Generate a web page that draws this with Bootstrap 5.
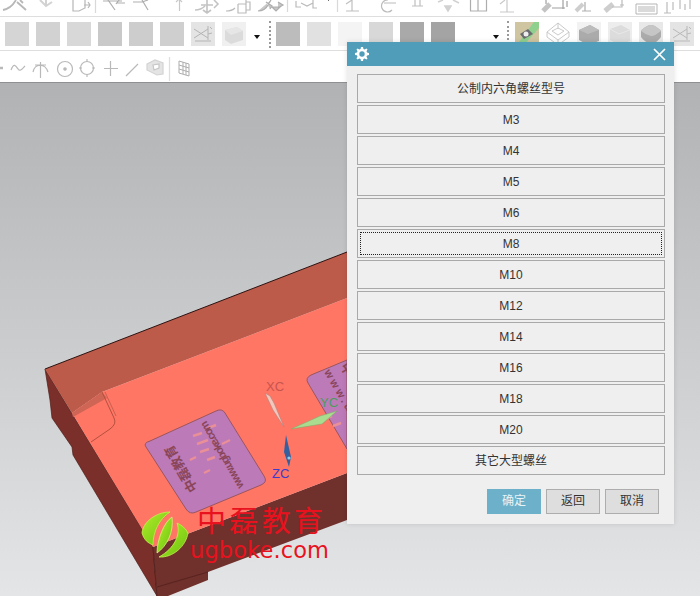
<!DOCTYPE html>
<html lang="zh-CN">
<head>
  <meta charset="UTF-8" />
  <meta name="viewport" content="width=device-width, initial-scale=1" />
  <title>公制内六角螺丝型号</title>
  <link href="https://cdn.jsdelivr.net/npm/bootstrap@5.3.0/dist/css/bootstrap.min.css" rel="stylesheet" />
  <style>
    html, body {
      margin: 0;
      background: #fff;
    }
    body {
      font-family: "Liberation Sans", "Noto Sans CJK SC", sans-serif;
      overflow: hidden;
    }
    .app-frame {
      position: relative;
      width: 700px;
      height: 596px;
      overflow: hidden;
    }
    .tool-strip {
      background: #fff;
      border-bottom: 1px solid #dedede;
    }
    .tool-strip svg {
      display: block;
      filter: blur(.4px);
    }
    .strip-top { height: 17px; }
    .strip-top svg, .strip-low svg { opacity: .8; }
    .strip-mid { height: 34px; padding: 5px 0 0 5px; gap: 7px; }
    .strip-low { height: 32px; border-bottom: 1px solid #8f9092; }
    .tool-sq { width: 24px; height: 24px; flex: none; }
    .tool-sq svg { width: 24px; height: 24px; }
    .sq-1 { background: #d5d5d5; }
    .sq-2 { background: #d2d2d2; }
    .sq-3 { background: #d8d8d8; }
    .sq-4 { background: #c9c9c9; }
    .sq-5 { background: #cdcdcd; }
    .sq-6 { background: #cfcfcf; }
    .sq-7 { background: #e4e4e4; }
    .sq-8 { background: #bcbcbc; }
    .sq-9 { background: #e1e1e1; }
    .sq-10 { background: #f4f4f4; }
    .sq-11 { background: #d8d8d8; }
    .sq-12 { background: #a9a9a9; }
    .sq-13 { background: #a4a4a4; }
    .sq-tan { background: #cfc5a0; }
    .tool-caret {
      width: 0;
      height: 0;
      flex: none;
      margin: 13px 0 0 1px;
      border-left: 3px solid transparent;
      border-right: 3px solid transparent;
      border-top: 4px solid #111;
    }
    .caret-far { margin-left: 31px; }
    .tool-dots {
      width: 0;
      height: 27px;
      flex: none;
      margin: -1px -2px 0 2px;
      border-left: 2px dotted #999;
    }
    .dots-far { margin-left: 1px; margin-right: -1px; }
    .view-area {
      height: 513px;
      background: linear-gradient(180deg, #b0b2b4 0%, #e4e5e6 100%);
    }
    .view-area svg {
      display: block;
    }
    .screw-dialog {
      position: absolute;
      left: 347px;
      top: 42px;
      width: 327px;
      height: 482px;
      background: #efefef;
      box-shadow: 0 0 5px rgba(0, 0, 0, .12);
    }
    .dialog-head {
      height: 24px;
      padding: 0 8px 0 8px;
      background: #4f9db8;
    }
    .dialog-head svg {
      display: block;
    }
    .size-list {
      gap: 2px;
      padding: 8px 9px 0 10px;
    }
    .size-btn {
      position: relative;
      height: 29px;
      padding: 1px 0 0;
      border: 1px solid #a9a9a9;
      border-radius: 0;
      background: #efefef;
      color: #333;
      font-size: 12px;
      line-height: 26px;
    }
    .size-btn:hover {
      background: #efefef;
      border-color: #a9a9a9;
      color: #333;
    }
    .size-active {
      outline: 1px dotted #222;
      outline-offset: -4px;
    }
    .dialog-foot {
      gap: 5px;
      padding: 14px 15px 0 0;
    }
    .foot-btn {
      width: 54px;
      height: 25px;
      padding: 0;
      border: 1px solid #adadad;
      border-radius: 0;
      background: #dedede;
      color: #333;
      font-size: 12px;
      line-height: 23px;
    }
    .foot-ok {
      background: #6cb0c9;
      border-color: #6cb0c9;
      color: #e8f4f8;
    }
    .axis-text {
      font-family: "Liberation Sans", sans-serif;
      font-size: 13px;
    }
    .pad-cn {
      font-family: "Noto Sans CJK SC", sans-serif;
      font-size: 13px;
      font-weight: 700;
      fill: #8a4658;
    }
    .pad-url {
      font-family: "Liberation Sans", sans-serif;
      font-size: 11px;
      font-weight: 700;
      fill: #8a4658;
    }
    .mark-cn {
      font-family: "Noto Sans CJK SC", sans-serif;
      font-size: 29px;
      font-weight: 400;
      fill: #e8121e;
    }
    .mark-url {
      font-family: "DejaVu Sans", sans-serif;
      font-size: 22.5px;
      fill: #e8121e;
    }
  </style>
</head>
<body>
  <div class="app-frame">

    <!-- top toolbar, icons are cut off by the window edge -->
    <div class="tool-strip strip-top">
      <svg width="700" height="16" fill="none" stroke="#a6a6a6" stroke-width="1.2">
        <path d="M3 10C9 9 13 5 16 0M17 2l9 8M20 0l3 3" stroke-width="1.8"/>
        <path d="M40 0l6 6 6-4M46 6V0" stroke="#c8c8c8" stroke-width="2"/>
        <path d="M73 0v11h6l6-3V0M84 5h6M88 2l2 3-2 3"/>
        <path d="M95.500 0v13" stroke="#d0d0d0"/>
        <path d="M103 1h10l9 0M108 0l7 10M116 4l3-4M117 3h8" stroke="#999"/>
        <path d="M133 2h9l6-2M142 0l6 10" stroke="#999"/>
        <path d="M179.500 0v11M176 2l3-3 3 3" stroke="#bbb"/>
        <path d="M195 10c4 0 8-2 10-4M207 0v12M201 5h12M214 0l4 4-4 4M203 10l4 3 4-3" stroke="#b5b5b5" stroke-width="1.600"/>
        <path d="M226 11c4 0 7-1 9-3M238 4v9h8V0M238 4h8M246 2h4v8h-4" stroke="#aaa"/>
        <path d="M258 11c4 0 8-2 10-6l3-5M266 2l6 4-2 3M272 7l4 4 4-4zM278 2l5 3-5 3" stroke="#999" fill="#bbb"/>
        <path d="M287.500 0v12" stroke="#d0d0d0"/>
        <path d="M296 1v6h5M301 3l6 3 6-3M313 0v8h4" stroke="#aaa"/>
        <path d="M328 0h1" stroke="#111" stroke-width="1.500"/>
        <path d="M337.500 0v12" stroke="#d0d0d0"/>
        <path d="M346 4l6-4M352 0v11M346 11h13" stroke="#b0b0b0"/>
        <path d="M388 0a6 6 0 1 0 4 10M384 3h12" stroke="#aaa"/>
        <path d="M415 0v6h5V0M412 6h11" stroke="#b0b0b0"/>
        <path d="M438 2l5-2M453 0l6 3M445 6l3 5 3-5z" fill="#c6c6c6" stroke="#c6c6c6" stroke-width="1.500"/>
        <path d="M470.500 0v11h16V0M478 0v11" stroke="#999"/>
        <path d="M500 4l5-4M507 0v12M500 12h14" stroke="#bbb"/>
        <path d="M543 11l7-7" stroke="#b5b5b5" stroke-width="5"/>
        <path d="M546 4V0M552 8h13M563 0v9M567 1v6" stroke="#888"/>
        <path d="M576 11l7-7" stroke="#c2c2c2" stroke-width="4"/>
        <path d="M582 11h9M585 2v9" stroke="#999"/>
        <path d="M605 11l8-7" stroke="#c2c2c2" stroke-width="5"/>
        <path d="M612 7h10V0M620 5h4" stroke="#aaa"/>
        <path d="M636 4h21v10h-21zM638 7h17M638 9h17M638 11h17" stroke="#999" stroke-width=".9"/>
        <path d="M667 2v11M673 2v8M680 0v9M690 0v9M685 4v6M664 13h7" stroke="#aaa"/>
      </svg>
    </div>

    <!-- middle toolbar -->
    <div class="tool-strip strip-mid d-flex align-items-start">
      <span class="tool-sq sq-1"></span>
      <span class="tool-sq sq-2"></span>
      <span class="tool-sq sq-3"></span>
      <span class="tool-sq sq-4"></span>
      <span class="tool-sq sq-5"></span>
      <span class="tool-sq sq-6"></span>
      <span class="tool-sq sq-7">
        <svg viewBox="0 0 24 24" fill="none" stroke="#b4b4b4" stroke-width="1"><path d="M3 7l14 9M3 16L17 7M17 4v14M4 19h16M19 5l2 2M17 12l4-1"/></svg>
      </span>
      <span class="tool-sq">
        <svg viewBox="0 0 24 24"><rect width="24" height="24" fill="#f0f0f0"/><path d="M3 8l12-3 6 4v9l-12 4-6-4z" fill="#dbdbdb"/><path d="M3 8l6 5 12-4-6-4z" fill="#e6e6e6"/></svg>
      </span>
      <span class="tool-caret"></span>
      <span class="tool-dots"></span>
      <span class="tool-sq sq-8"></span>
      <span class="tool-sq sq-9"></span>
      <span class="tool-sq sq-10"></span>
      <span class="tool-sq sq-11"></span>
      <span class="tool-sq sq-12"></span>
      <span class="tool-sq sq-13"></span>
      <span class="tool-caret caret-far"></span>
      <span class="tool-dots dots-far"></span>
      <span class="tool-sq sq-tan">
        <svg viewBox="0 0 24 24"><path d="M8 24l16-18V0h-5L4 20z" fill="#8fd08f"/><path d="M5 12l8-5 5 5-9 5z" fill="#6b6b70"/><circle cx="11" cy="12" r="2.500" fill="#eee"/></svg>
      </span>
      <span class="tool-sq">
        <svg viewBox="0 0 24 24" fill="none" stroke="#c4c4c4" stroke-width=".9"><path d="M12 1l11 9-11 8L1 10zM1 10v5l11 8 11-8v-5M12 18v5M12 1v6M6 9l6-3 6 3-6 4z"/></svg>
      </span>
      <span class="tool-sq">
        <svg viewBox="0 0 24 24"><rect width="24" height="24" fill="#f2f2f2"/><path d="M2 8l11-5 9 5v11l-11 4-9-5z" fill="#ababab"/><path d="M2 8l9 4 11-4-9-5z" fill="#bcbcbc"/></svg>
      </span>
      <span class="tool-sq">
        <svg viewBox="0 0 24 24"><rect width="24" height="24" fill="#ededed"/><path d="M2 7l11-4 9 5v11l-11 4-9-5z" fill="#dcdcdc"/><path d="M2 7l9 5 11-4" fill="none" stroke="#e8e8e8"/></svg>
      </span>
      <span class="tool-sq">
        <svg viewBox="0 0 24 24"><rect width="24" height="24" fill="#e8e8e8"/><path d="M2 9c4-5 8-6 11-6 4 1 7 4 9 6v6c-3 4-7 7-10 7-4-1-8-4-10-7z" fill="#ababab"/><path d="M2 9c4-5 8-6 11-6 4 1 7 4 9 6-4 3-7 5-10 5-4-1-7-3-10-5z" fill="#c6c6c6"/></svg>
      </span>
      <span class="tool-sq sq-7">
        <svg viewBox="0 0 24 24" fill="none" stroke="#b8b8b8" stroke-width="1"><path d="M3 7l14 9M3 16L17 7M17 4v14M4 19h16M19 5l2 2M17 12l4-1"/></svg>
      </span>
    </div>

    <!-- lower toolbar -->
    <div class="tool-strip strip-low">
      <svg width="700" height="31" fill="none" stroke="#a8a8a8" stroke-width="1.200">
        <path d="M0 17h3" stroke-width="2.500"/>
        <path d="M11 19c3-8 5-4 7-1s4 0 7-3"/>
        <path d="M33 21c2-9 12-9 15 0M40.500 11v16M35 14h11"/>
        <circle cx="65" cy="18" r="7.500"/>
        <circle cx="65" cy="18" r="1.200" fill="#a8a8a8"/>
        <circle cx="87" cy="17" r="6.500"/>
        <path d="M87 8v3M87 23v3M79 17h3M92 17h3"/>
        <path d="M110.500 10v15M104 17.500h14"/>
        <path d="M127 24l11-11M126 25l2-2" stroke-width="1.200"/>
        <path d="M147 13l8-4 8 3v11l-6 1-10-5z" fill="#dedede" stroke="#c8c8c8"/>
        <path d="M153 14l6-1v4l-5 2z" fill="#fff" stroke="#b8b8b8"/>
        <path d="M169.500 6v24" stroke="#d8d8d8"/>
        <path d="M179 10l10 3v12l-10-3zM179 14l10 3M179 18l10 3M183 11v12M186 12v12" stroke="#999" stroke-width="1"/>
      </svg>
    </div>

    <!-- 3d view -->
    <div class="view-area">
      <svg width="700" height="513" viewBox="0 83 700 513">
        <defs>
          <linearGradient id="leafFill" x1="0" y1="0" x2="1" y2="1">
            <stop offset="0" stop-color="#b4ea2e"/>
            <stop offset=".5" stop-color="#8ed81c"/>
            <stop offset="1" stop-color="#6cc012"/>
          </linearGradient>
        </defs>

        <path d="M45 369L153 547 157 596 73 455 72 447 52 418 50 400z" fill="#7b2f2a" stroke="#4c1c18" stroke-width=".7"/>
        <path d="M153 547L347 473V520L208 572V580L168 596H157z" fill="#70302c"/>
        <path d="M153 547L157 596M157 587L208 572" stroke="#4c1c18" stroke-width=".7" fill="none"/>
        <path d="M45 369L347 252V298L102 392 72 413z" fill="#bd5b4b"/>
        <path d="M45 369L347 252" stroke="#2c1210" stroke-width="1" fill="none"/>
        <path d="M72 413L102 392 347 298V473L153 547z" fill="#ff7665"/>
        <path d="M72 413L102 392 107 398 73 417z" fill="#cf6555"/>
        <path d="M102 392L114 418Q117 424 110 429L91 442" fill="none" stroke="#b4503f" stroke-width="1"/>
        <path d="M105 392L116 416" fill="none" stroke="#c9604f" stroke-width="1"/>

        <path d="M150 441L216 411Q222 408 225 413L264 476Q268 482 261 485L196 512Q190 515 186 509L146 447Q143 443 150 441z" fill="#bc7ab8" stroke="#9a5560" stroke-width="1"/>
        <path d="M193 436l9-3M197 444l11-4M200 452l9-3M222 444l8-4M207 460l8-3M190 460l6-3M204 473l6-3M208 428l8-3" stroke="#e88f98" stroke-width="2.500" fill="none"/>
        <text class="pad-cn" transform="translate(198 489) rotate(240)">中磊教育</text>
        <text class="pad-url" transform="translate(244 486) rotate(240)" textLength="76">www.ugboke.com</text>

        <path d="M347 360L311 375Q305 378 308 383L347 449z" fill="#bc7ab8" stroke="#9a5560" stroke-width="1"/>
        <path d="M333 426l8-3M325 419l7-3" stroke="#e88f98" stroke-width="2.500" fill="none"/>
        <text class="pad-url" transform="translate(324 372) rotate(60)" textLength="55">www.ug</text>
        <text class="pad-cn" transform="translate(340 366) rotate(60)">中</text>

        <path d="M284 427L273 410 265 393 270 396 274 403z" fill="#f3c8bb" stroke="#a08080" stroke-width=".5"/>
        <path d="M291 429L320 416 337 411 322 424z" fill="#a9dc8f" stroke="#7ca86a" stroke-width=".5"/>
        <path d="M286 435L284 452 289 467 291 457z" fill="#35609f"/>
        <circle cx="289" cy="458" r="1.600" fill="#8fd0e8"/>
        <text class="axis-text" x="266" y="391" fill="#c8544f">XC</text>
        <text class="axis-text" x="320" y="407" fill="#4f9c5c">YC</text>
        <text class="axis-text" x="272" y="478" fill="#3a3ccc">ZC</text>

        <!-- watermark -->
        <path d="M170 512C156 512 143 522 142 533 144 540 148 543 153 545 153 532 159 519 170 512z" fill="url(#leafFill)" stroke="#c4f04e" stroke-width=".8"/>
        <path d="M172 517C164 522 157 540 157 553 167 546 174 532 172 517z" fill="url(#leafFill)" stroke="#d4f57a" stroke-width=".8"/>
        <path d="M177 523C181 534 175 548 159 557 173 558 186 546 188 533 186 529 182 525 177 523z" fill="url(#leafFill)" stroke="#c4f04e" stroke-width=".8"/>
        <text class="mark-cn" x="197" y="532" textLength="126">中磊教育</text>
        <text class="mark-url" x="190" y="558" textLength="139">ugboke.com</text>
      </svg>
    </div>

    <!-- screw size dialog -->
    <div class="screw-dialog d-flex flex-column">
      <div class="dialog-head d-flex align-items-center justify-content-between">
        <svg width="14" height="14" viewBox="0 0 14 14">
          <path d="M6 0h2l.4 2 1.300.6L11.500 1.500l1 1-1 1.800.6 1.300 1.900.4v2l-1.900.4-.6 1.300 1 1.800-1 1-1.800-1-1.300.6L8 14H6l-.4-2-1.300-.6-1.800 1-1-1 1-1.800-.6-1.300L0 8V6l1.900-.4.6-1.300-1-1.800 1-1 1.800 1 1.300-.6z" fill="#fff"/>
          <circle cx="7" cy="7" r="2.700" fill="#4f9db8"/>
        </svg>
        <svg width="13" height="13" viewBox="0 0 13 13" fill="none" stroke="#fff" stroke-width="1.700">
          <path d="M1 1l11 11M12 1L1 12"/>
        </svg>
      </div>
      <div class="size-list d-flex flex-column">
        <button type="button" class="btn size-btn">公制内六角螺丝型号</button>
        <button type="button" class="btn size-btn">M3</button>
        <button type="button" class="btn size-btn">M4</button>
        <button type="button" class="btn size-btn">M5</button>
        <button type="button" class="btn size-btn">M6</button>
        <button type="button" class="btn size-btn size-active">M8</button>
        <button type="button" class="btn size-btn">M10</button>
        <button type="button" class="btn size-btn">M12</button>
        <button type="button" class="btn size-btn">M14</button>
        <button type="button" class="btn size-btn">M16</button>
        <button type="button" class="btn size-btn">M18</button>
        <button type="button" class="btn size-btn">M20</button>
        <button type="button" class="btn size-btn">其它大型螺丝</button>
      </div>
      <div class="dialog-foot d-flex justify-content-end">
        <button type="button" class="btn foot-btn foot-ok">确定</button>
        <button type="button" class="btn foot-btn">返回</button>
        <button type="button" class="btn foot-btn">取消</button>
      </div>
    </div>

  </div>
  <script src="https://cdn.jsdelivr.net/npm/bootstrap@5.3.0/dist/js/bootstrap.bundle.min.js"></script>
</body>
</html>
